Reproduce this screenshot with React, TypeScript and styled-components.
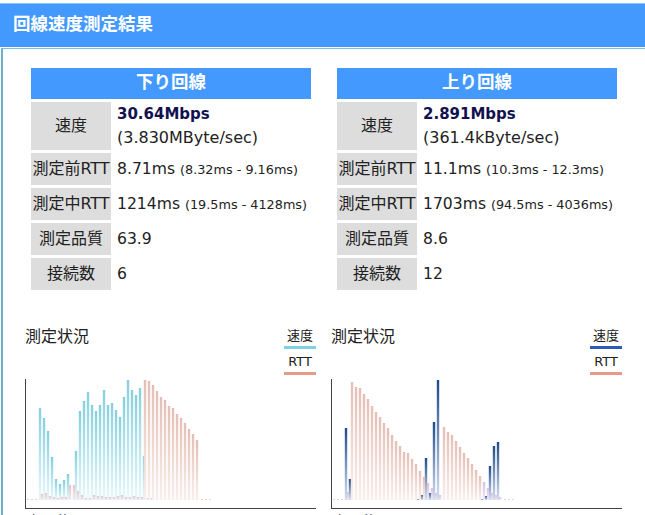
import React from "react";
import styled, { createGlobalStyle } from "styled-components";

const Global = createGlobalStyle`
  html, body { margin: 0; padding: 0; background: #fff; overflow: hidden; }
  body { width: 645px; height: 515px; font-family: "DejaVu Sans", "Noto Sans CJK JP", sans-serif; color: #222; }
`;

const Page = styled.div`
  width: 645px;
  height: 515px;
  overflow: hidden;
  padding-top: 3px;
  box-sizing: border-box;
`;
const Banner = styled.h1`
  margin: 0;
  height: 44px;
  background: #4499ff;
  border-top: 1px solid #8cc4f0;
  box-sizing: border-box;
  color: #fff;
  font-size: 17.5px;
  font-weight: 700;
  line-height: 41px;
  padding-left: 13px;
`;
const Panel = styled.div`
  margin: 1px 0 0 1px;
  border-top: 1px solid #7cc0d8;
  border-left: 2px solid #6cb0c4;
  padding: 19px 0 0 22px;
  display: grid;
  grid-template-columns: 292px 292px;
  column-gap: 14px;
`;
const Column = styled.section`
  display: flex;
  flex-direction: column;
`;
const Table = styled.div`
  margin-left: 6px;
  width: 280px;
  display: grid;
  grid-template-columns: 80px 1fr;
  row-gap: 3px;
`;
const TableHead = styled.div`
  grid-column: 1 / 3;
  height: 31px;
  background: #4499ff;
  color: #fff;
  font-size: 17.5px;
  font-weight: 700;
  line-height: 29px;
  text-align: center;
`;
const Label = styled.div<{ $tall?: boolean }>`
  height: ${(p) => (p.$tall ? 48 : 32)}px;
  background: #dddddd;
  box-sizing: border-box;
  padding-bottom: 4px;
  font-size: 16px;
  display: flex;
  align-items: center;
  justify-content: center;
  white-space: nowrap;
`;
const Value = styled.div`
  padding-left: 6px;
  font-size: 15.6px;
  display: flex;
  flex-direction: column;
  justify-content: center;
  white-space: nowrap;
  line-height: 24px;
`;
const Speed = styled.strong`
  color: #11114f;
  font-size: 15px;
  font-weight: 700;
`;
const Bytes = styled.span`
  font-size: 16px;
`;
const Range = styled.small`
  font-size: 12.8px;
`;
const ChartHead = styled.div`
  margin-top: 36px;
  height: 53px;
  display: flex;
  justify-content: space-between;
  width: 291px;
`;
const ChartTitle = styled.div`
  font-size: 16px;
  line-height: 22px;
`;
const Legend = styled.div`
  width: 32px;
  display: flex;
  flex-direction: column;
  text-align: center;
  font-size: 13px;
  line-height: 20px;
`;
const LegendItem = styled.div<{ $color: string }>`
  height: 23px;
  box-sizing: border-box;
  border-bottom: 3px solid ${(p) => p.$color};
  margin-bottom: 3px;
`;
const Plot = styled.div`
  width: 291px;
  height: 130px;
  border-left: 1px solid #444;
  border-bottom: 1px solid #444;
  box-sizing: border-box;
`;
const Canvas = styled.svg`
  display: block;
`;
const AxisLabel = styled.div`
  font-size: 13px;
  line-height: 16px;
  margin-top: 4px;
`;

type Bar = [number, number];

const down: Bar[] = [[40,408],[44,418],[48,431],[52,457],[56,479],[60,484],[64,480],[68,474],[76,451],[80,411],[84,401],[88,392],[92,405],[96,411],[100,405],[104,390],[108,405],[112,403],[116,410],[120,417],[124,397],[128,380],[132,390],[136,395],[140,388],[144,456],[148,498],[152,498]];
const downRtt: Bar[] = [[42,494],[46,493],[50,496],[54,497],[58,498],[62,497],[66,497],[70,485],[74,485],[78,491],[82,495],[86,498],[90,498],[94,495],[98,496],[102,496],[106,497],[110,497],[114,497],[118,496],[122,495],[126,497],[130,497],[134,496],[138,497],[142,497],[145,380],[149,381],[153,385],[157,391],[161,397],[165,400],[169,406],[173,408],[177,414],[181,418],[185,423],[189,429],[193,434],[197,440]];
const up: Bar[] = [[346,428],[350,479],[418,499],[422,495],[426,458],[430,493],[434,422],[438,380],[482,499],[486,496],[490,466],[494,446],[498,442]];
const upRtt: Bar[] = [[348,492],[352,382],[356,387],[360,388],[364,394],[368,399],[372,406],[376,412],[380,417],[384,423],[388,428],[392,435],[396,441],[400,446],[404,452],[408,453],[412,459],[416,464],[420,471],[424,477],[428,483],[432,488],[436,493],[440,495],[444,427],[448,432],[452,435],[456,441],[460,447],[464,453],[468,458],[472,464],[476,470],[480,476],[484,482],[488,488],[492,493],[496,495],[500,497]];

const BASE = 500;
const LOW = 480;

function Chart({ id, speed, rtt, origin, dashL, dashR, speedTop, speedBottom, lowTop, lowBottom }: {
  id: string; speed: Bar[]; rtt: Bar[]; origin: number; dashL: number[]; dashR: number[];
  speedTop: string; speedBottom: string; lowTop: string; lowBottom: string;
}) {
  return (
    <Canvas width={290} height={129} viewBox={`${origin} 379 290 129`}>
      <defs>
        <linearGradient id={`${id}s`} x1="0" y1="0" x2="0" y2="1">
          <stop offset="0" stopColor={speedTop} />
          <stop offset="1" stopColor={speedBottom} />
        </linearGradient>
        <linearGradient id={`${id}r`} x1="0" y1="0" x2="0" y2="1">
          <stop offset="0" stopColor="#e2bbb0" />
          <stop offset="1" stopColor="#f9eeeb" />
        </linearGradient>
        <linearGradient id={`${id}l`} x1="0" y1="0" x2="0" y2="1">
          <stop offset="0" stopColor={lowTop} />
          <stop offset="1" stopColor={lowBottom} />
        </linearGradient>
      </defs>
      {speed.map(([x, y]) => (
        <rect key={x} x={x - 1.2} y={y} width={2.4} height={BASE - y} fill={`url(#${id}s)`} />
      ))}
      {rtt.map(([x, y]) => (
        <rect key={x} x={x - 1.2} y={y} width={2.4} height={BASE - y} fill={`url(#${id}${y >= LOW ? "l" : "r"})`} opacity={y >= LOW ? 0.85 : 0.95} />
      ))}
      {[...dashL, ...dashR].map((x) => (
        <rect key={`d${x}`} x={x} y={499} width={2} height={1} fill="#ecd5cf" />
      ))}
    </Canvas>
  );
}

function Side(props: {
  title: string; speed: string; bytes: string; pre: string; preR: string; mid: string; midR: string;
  quality: string; conns: string; chart: React.ReactNode; legend: string;
}) {
  return (
    <Column>
      <Table>
        <TableHead>{props.title}</TableHead>
        <Label $tall>速度</Label>
        <Value><Speed>{props.speed}</Speed><Bytes>{props.bytes}</Bytes></Value>
        <Label>測定前RTT</Label>
        <Value><span>{props.pre} <Range>{props.preR}</Range></span></Value>
        <Label>測定中RTT</Label>
        <Value><span>{props.mid} <Range>{props.midR}</Range></span></Value>
        <Label>測定品質</Label>
        <Value>{props.quality}</Value>
        <Label>接続数</Label>
        <Value>{props.conns}</Value>
      </Table>
      <ChartHead>
        <ChartTitle>測定状況</ChartTitle>
        <Legend>
          <LegendItem $color={props.legend}>速度</LegendItem>
          <LegendItem $color="#e69a8a">RTT</LegendItem>
        </Legend>
      </ChartHead>
      <Plot>{props.chart}</Plot>
      <AxisLabel>時間(秒)</AxisLabel>
    </Column>
  );
}

export default function App() {
  return (
    <Page>
      <Global />
      <Banner>回線速度測定結果</Banner>
      <Panel>
        <Side
          title="下り回線" speed="30.64Mbps" bytes="(3.830MByte/sec)"
          pre="8.71ms" preR="(8.32ms - 9.16ms)" mid="1214ms" midR="(19.5ms - 4128ms)"
          quality="63.9" conns="6" legend="#7fd0e4"
          chart={<Chart id="a" origin={26} speed={down} rtt={downRtt} dashL={[27, 31, 35]} dashR={[201, 205, 209]} speedTop="#86cfdc" speedBottom="#e8f8fb" lowTop="#e2bcc4" lowBottom="#f3e6ea" />}
        />
        <Side
          title="上り回線" speed="2.891Mbps" bytes="(361.4kByte/sec)"
          pre="11.1ms" preR="(10.3ms - 12.3ms)" mid="1703ms" midR="(94.5ms - 4036ms)"
          quality="8.6" conns="12" legend="#2a5cc0"
          chart={<Chart id="b" origin={332} speed={up} rtt={upRtt} dashL={[333, 337, 341]} dashR={[504, 508, 512]} speedTop="#1c4a8a" speedBottom="#d5dff0" lowTop="#cdb8e0" lowBottom="#eee6f4" />}
        />
      </Panel>
    </Page>
  );
}
